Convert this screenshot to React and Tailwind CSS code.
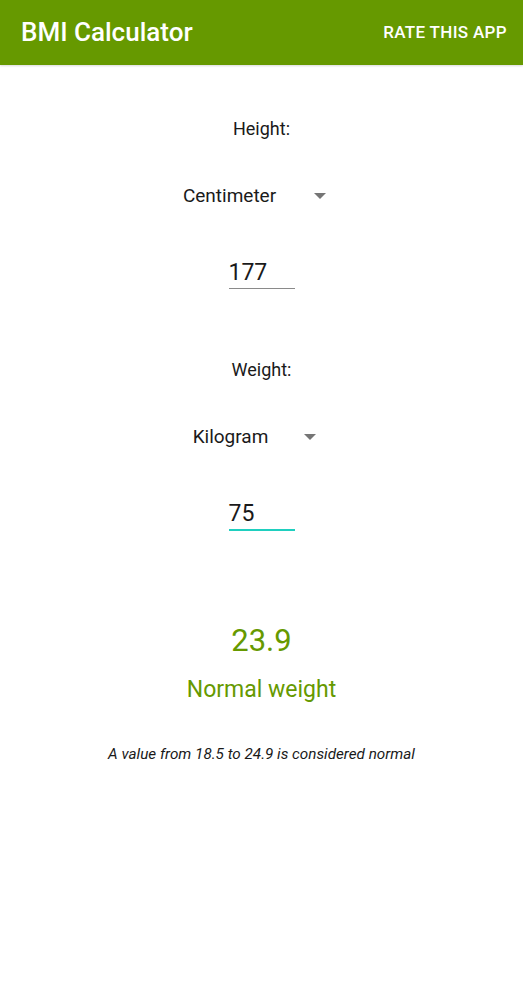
import React from "react";

function Arrow() {
  return (
    <svg width="12" height="6" viewBox="0 0 12 6" className="block">
      <path d="M0 0 L12 0 L6 6 Z" fill="#757575" />
    </svg>
  );
}

function Section({ label, unit, value, focused, gap }) {
  return (
    <div className="flex flex-col items-center h-[241px]">
      <div className="h-[24px] leading-[24px] text-[18px] text-[#1a1a1a]">{label}</div>
      <div className="mt-[43px] h-[24px] flex items-center pr-[14px]">
        <span className="leading-[24px] text-[19px] text-[#1a1a1a]">{unit}</span>
        <span className={gap}>
          <Arrow />
        </span>
      </div>
      <div
        className={
          "mt-[51px] w-[66px] pb-[1px] " +
          (focused ? "border-b-2 border-[#1fcfbf]" : "border-b border-[#8a8a8a]")
        }
      >
        <div className="leading-[28px] text-[23px] text-[#1a1a1a] pl-[0px]">{value}</div>
      </div>
    </div>
  );
}

export default function App() {
  return (
    <div
      className="w-[523px] h-[1000px] bg-white"
      style={{ fontFamily: "Roboto, 'Noto Sans', sans-serif" }}
    >
      <div className="h-[65px] bg-[#669900] flex items-center justify-between pl-[21px] pr-[16px] shadow-[0_1px_2px_rgba(0,0,0,0.15)]">
        <span className="text-white text-[26px] font-medium leading-[30px] -mt-[1px]">BMI Calculator</span>
        <span className="text-white text-[17px] font-medium leading-[20px] tracking-[0.02em] -mt-[1px]">RATE THIS APP</span>
      </div>
      <div className="pt-[52px]">
        <Section label="Height:" unit="Centimeter" value="177" gap="ml-[38px]" />
        <Section label="Weight:" unit="Kilogram" value="75" focused gap="ml-[36px]" />
        <div className="flex flex-col items-center">
          <div className="mt-[24px] text-[31px] leading-[36px] text-[#669900]">23.9</div>
          <div className="mt-[16px] text-[23px] leading-[30px] text-[#669900]">Normal weight</div>
          <div className="mt-[39px] text-[15.25px] leading-[20px] italic text-[#1a1a1a]">
            A value from 18.5 to 24.9 is considered normal
          </div>
        </div>
      </div>
    </div>
  );
}
